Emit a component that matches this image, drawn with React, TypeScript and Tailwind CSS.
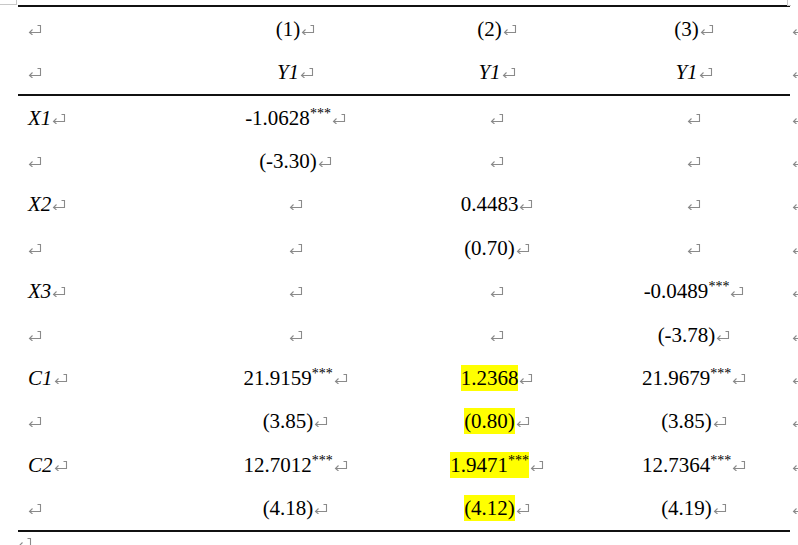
import React from "react";

type C = { t?: string; i?: boolean; s?: boolean; h?: boolean } | null;

function Ret({ className = "" }: { className?: string }) {
  return (
    <svg
      width="14"
      height="11"
      viewBox="0 0 14 11"
      className={"inline-block shrink-0 " + className}
      fill="none"
      stroke="#8a8a8a"
      strokeWidth="1.1"
    >
      <path d="M1.5 8.5 H12.5 V1.5 H9.5" />
      <path d="M4.5 5.5 L1.5 8.5 L4.5 11" />
    </svg>
  );
}

function Cell({ c, left }: { c: C; left?: boolean }) {
  const inner = c ? (
    <span
      className={
        (c.h ? "bg-[#ffff00] " : "") +
        "inline-block h-[26px] leading-[26px] " +
        (c.i ? "italic" : "")
      }
    >
      {c.t}
      {c.s ? <sup className="text-[14px] -top-[7px]">***</sup> : null}
    </span>
  ) : null;
  return (
    <div
      className={
        "flex items-center " + (left ? "justify-start pl-[10px]" : "justify-center")
      }
    >
      <span className="flex items-center">
        {inner}
        <Ret className={c ? "ml-[1px] mt-[1px]" : "mt-[1px]"} />
      </span>
    </div>
  );
}

const header: C[][] = [
  [null, { t: "(1)" }, { t: "(2)" }, { t: "(3)" }],
  [null, { t: "Y1", i: true }, { t: "Y1", i: true }, { t: "Y1", i: true }],
];

const body: C[][] = [
  [{ t: "X1", i: true }, { t: "-1.0628", s: true }, null, null],
  [null, { t: "(-3.30)" }, null, null],
  [{ t: "X2", i: true }, null, { t: "0.4483" }, null],
  [null, null, { t: "(0.70)" }, null],
  [{ t: "X3", i: true }, null, null, { t: "-0.0489", s: true }],
  [null, null, null, { t: "(-3.78)" }],
  [{ t: "C1", i: true }, { t: "21.9159", s: true }, { t: "1.2368", h: true }, { t: "21.9679", s: true }],
  [null, { t: "(3.85)" }, { t: "(0.80)", h: true }, { t: "(3.85)" }],
  [{ t: "C2", i: true }, { t: "12.7012", s: true }, { t: "1.9471", s: true, h: true }, { t: "12.7364", s: true }],
  [null, { t: "(4.18)" }, { t: "(4.12)", h: true }, { t: "(4.19)" }],
];

function Row({ cells, h }: { cells: C[]; h: string }) {
  return (
    <div className={"grid grid-cols-[177px_201px_202px_192px_20px] " + h}>
      {cells.map((c, k) => (
        <Cell key={k} c={c} left={k === 0} />
      ))}
      <div className="flex items-center pl-[2px]">
        <Ret className="mt-[1px]" />
      </div>
    </div>
  );
}

export default function App() {
  return (
    <div
      className="relative w-[798px] h-[545px] overflow-hidden bg-white text-black text-[21px]"
      style={{ fontFamily: '"Liberation Serif", "Times New Roman", serif' }}
    >
      <div className="absolute left-0 top-0 w-[17px] h-[5px] border-r border-b border-[#c8c8c8]" />
      <div className="absolute left-[787px] top-0 w-[4px] h-[6px] border-l border-b border-[#c8c8c8]" />
      <div className="pt-[5px] pl-[18px] flex flex-col">
        <div className="w-[772px] h-[2px] bg-[#111]" />
        {header.map((r, k) => (
          <Row key={k} cells={r} h="h-[43.5px]" />
        ))}
        <div className="w-[772px] h-[2px] bg-[#111]" />
        {body.map((r, k) => (
          <Row key={k} cells={r} h="h-[43.4px]" />
        ))}
        <div className="w-[772px] h-[2px] bg-[#111]" />
        <div className="h-[12px] flex items-start pt-[5px]">
          <Ret />
        </div>
      </div>
    </div>
  );
}
